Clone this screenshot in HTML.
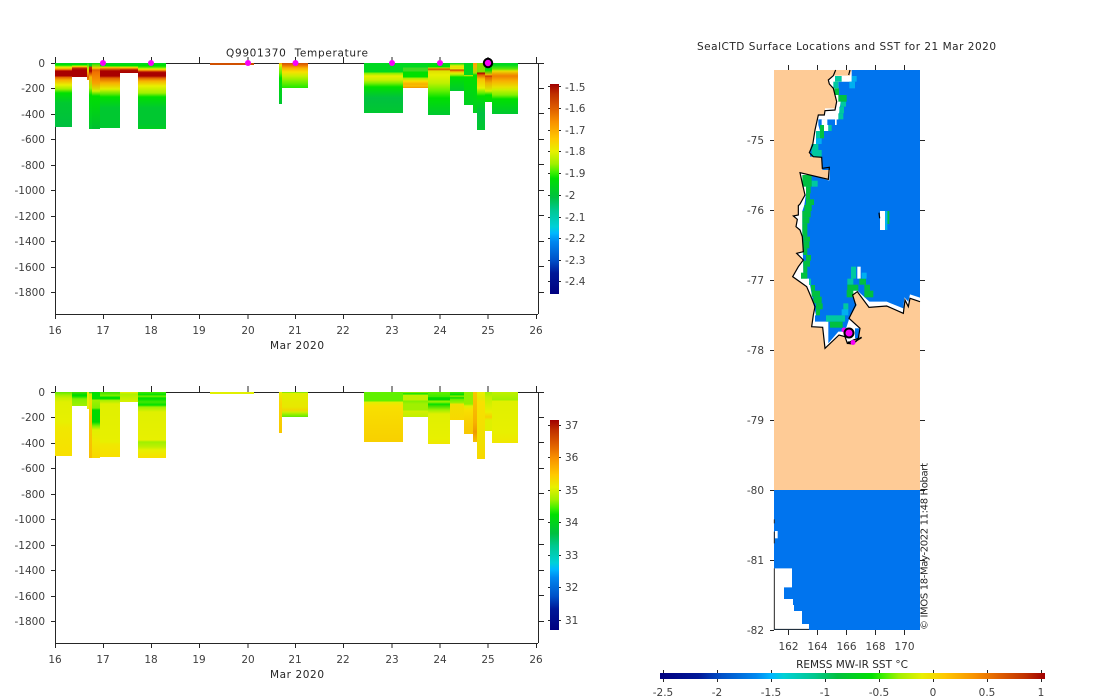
<!DOCTYPE html>
<html><head><meta charset="utf-8"><title>SealCTD</title>
<style>
html,body{margin:0;padding:0;background:#fff;width:1100px;height:700px;overflow:hidden}
svg{position:absolute;left:0;top:0}
.c{position:absolute}
text{font-family:"DejaVu Sans","Liberation Sans",sans-serif;font-size:10.5px;fill:#404040}
.t{fill:#262626}
</style></head><body>
<svg width="1100" height="700" viewBox="0 0 1100 700">
<defs>
<linearGradient id="jv" x1="0" y1="1" x2="0" y2="0">
<stop offset="0" stop-color="#000080"/><stop offset=".10" stop-color="#001898"/><stop offset=".16" stop-color="#0050c8"/><stop offset=".25" stop-color="#0088f0"/><stop offset=".29" stop-color="#00b8ff"/><stop offset=".32" stop-color="#00d0d8"/><stop offset=".40" stop-color="#00c890"/><stop offset=".46" stop-color="#00c040"/><stop offset=".55" stop-color="#00e000"/><stop offset=".58" stop-color="#40f000"/><stop offset=".62" stop-color="#a0f000"/><stop offset=".68" stop-color="#e8f000"/><stop offset=".74" stop-color="#ffc800"/><stop offset=".82" stop-color="#f89000"/><stop offset=".88" stop-color="#e06000"/><stop offset=".95" stop-color="#c03000"/><stop offset="1" stop-color="#a00000"/>
</linearGradient>
<linearGradient id="jh" x1="0" y1="0" x2="1" y2="0">
<stop offset="0" stop-color="#000080"/><stop offset=".10" stop-color="#001898"/><stop offset=".16" stop-color="#0050c8"/><stop offset=".25" stop-color="#0088f0"/><stop offset=".29" stop-color="#00b8ff"/><stop offset=".32" stop-color="#00d0d8"/><stop offset=".40" stop-color="#00c890"/><stop offset=".46" stop-color="#00c040"/><stop offset=".55" stop-color="#00e000"/><stop offset=".58" stop-color="#40f000"/><stop offset=".62" stop-color="#a0f000"/><stop offset=".68" stop-color="#e8f000"/><stop offset=".74" stop-color="#ffc800"/><stop offset=".82" stop-color="#f89000"/><stop offset=".88" stop-color="#e06000"/><stop offset=".95" stop-color="#c03000"/><stop offset="1" stop-color="#a00000"/>
</linearGradient>
</defs>
<g fill="none" stroke="#262626" stroke-width="1">
<path d="M55.5 57V319M538.5 63V314M55 314.500H538M55 63.500H544"/>
<path d="M103.500 57V63M151.500 57V63M199.500 57V63M248 57V63M295.500 57V63M343.500 57V63M392 57V63M440 57V63M488 57V63M536.500 57V63"/>
<path d="M103.500 314V319M151.500 314V319M199.500 314V319M248 314V319M295.500 314V319M343.500 314V319M392 314V319M440 314V319M488 314V319M536.500 314V319"/>
<path d="M51 63.500H55M51 88.500H55M51 114.500H55M51 139.500H55M51 165.500H55M51 190.500H55M51 216.500H55M51 241.500H55M51 267.500H55M51 292.500H55"/>
<path d="M538 88.500H544M538 113.500H544M538 139.500H544M538 164.500H544M538 190.500H544M538 215.500H544M538 241.500H544M538 266.500H544M538 292.500H544"/>
<path d="M548 86.500H550M548 108.500H550M548 130.500H550M548 151.500H550M548 173.500H550M548 195.500H550M548 217.500H550M548 238.500H550M548 260.500H550M548 281.500H550"/>
<path d="M559 86.500H561M559 108.500H561M559 130.500H561M559 151.500H561M559 173.500H561M559 195.500H561M559 217.500H561M559 238.500H561M559 260.500H561M559 281.500H561"/>
<path d="M55.500 386V648M538.500 392V643M55 643.500H538M55 392.500H544"/>
<path d="M103.500 386V392M151.500 386V392M199.500 386V392M248 386V392M295.500 386V392M343.500 386V392M392 386V392M440 386V392M488 386V392M536.500 386V392"/>
<path d="M103.500 643V648M151.500 643V648M199.500 643V648M248 643V648M295.500 643V648M343.500 643V648M392 643V648M440 643V648M488 643V648M536.500 643V648"/>
<path d="M51 392.500H55M51 417.500H55M51 443.500H55M51 468.500H55M51 494.500H55M51 519.500H55M51 545.500H55M51 570.500H55M51 596.500H55M51 621.500H55"/>
<path d="M538 417.500H544M538 442.500H544M538 468.500H544M538 493.500H544M538 519.500H544M538 544.500H544M538 570.500H544M538 595.500H544M538 621.500H544"/>
<path d="M548 425.500H550M548 457.500H550M548 490.500H550M548 522.500H550M548 555.500H550M548 587.500H550M548 620.500H550"/>
<path d="M559 425.500H561M559 457.500H561M559 490.500H561M559 522.500H561M559 555.500H561M559 587.500H561M559 620.500H561"/>
<path d="M788.500 65V70M817.500 65V70M846.500 65V70M875.500 65V70M904.500 65V70M788.500 630V635M817.500 630V635M846.500 630V635M875.500 630V635M904.500 630V635"/>
<path d="M770 140.500H774M770 210.500H774M770 280.500H774M770 350.500H774M770 420.500H774M770 490.500H774M770 560.500H774M770 630.500H774"/>
<path d="M920 140.500H925M920 210.500H925M920 280.500H925M920 350.500H925M920 420.500H925M920 490.500H925M920 560.500H925"/>
<path d="M663.500 670V682M717.500 670V682M771.500 670V682M825.500 670V682M879.500 670V682M933.500 670V682M987.500 670V682M1041.500 670V682"/>
</g>
<rect x="550" y="84" width="9" height="210" fill="url(#jv)"/>
<rect x="550" y="420" width="9" height="210" fill="url(#jv)"/>
<rect x="660" y="673" width="385" height="6" fill="url(#jh)"/>
<g text-anchor="end">
<text x="45" y="67">0</text><text x="45" y="92">-200</text><text x="45" y="118">-400</text><text x="45" y="143">-600</text><text x="45" y="169">-800</text><text x="45" y="194">-1000</text><text x="45" y="220">-1200</text><text x="45" y="245">-1400</text><text x="45" y="271">-1600</text><text x="45" y="296">-1800</text>
<text x="45" y="396">0</text><text x="45" y="421">-200</text><text x="45" y="447">-400</text><text x="45" y="472">-600</text><text x="45" y="498">-800</text><text x="45" y="523">-1000</text><text x="45" y="549">-1200</text><text x="45" y="574">-1400</text><text x="45" y="600">-1600</text><text x="45" y="625">-1800</text>
<text x="764" y="144">-75</text><text x="764" y="214">-76</text><text x="764" y="284">-77</text><text x="764" y="354">-78</text><text x="764" y="424">-79</text><text x="764" y="494">-80</text><text x="764" y="564">-81</text><text x="764" y="634">-82</text>
</g>
<g text-anchor="middle">
<text x="55" y="334">16</text><text x="103" y="334">17</text><text x="151" y="334">18</text><text x="199" y="334">19</text><text x="248" y="334">20</text><text x="295" y="334">21</text><text x="343" y="334">22</text><text x="392" y="334">23</text><text x="440" y="334">24</text><text x="488" y="334">25</text><text x="536" y="334">26</text>
<text x="55" y="663">16</text><text x="103" y="663">17</text><text x="151" y="663">18</text><text x="199" y="663">19</text><text x="248" y="663">20</text><text x="295" y="663">21</text><text x="343" y="663">22</text><text x="392" y="663">23</text><text x="440" y="663">24</text><text x="488" y="663">25</text><text x="536" y="663">26</text>
<text class="t" x="297" y="349" textLength="54">Mar 2020</text><text class="t" x="297" y="678" textLength="54">Mar 2020</text>
<text class="t" x="297" y="56.500" xml:space="preserve" textLength="142">Q9901370  Temperature</text>
<text class="t" x="846.500" y="50" textLength="299">SealCTD Surface Locations and SST for 21 Mar 2020</text>
<text class="t" x="852" y="668">REMSS MW-IR SST °C</text>
<text x="788.500" y="650">162</text><text x="817.500" y="650">164</text><text x="846.500" y="650">166</text><text x="875.500" y="650">168</text><text x="904.500" y="650">170</text>
<text x="663" y="696">-2.5</text><text x="717" y="696">-2</text><text x="771" y="696">-1.5</text><text x="825" y="696">-1</text><text x="879" y="696">-0.5</text><text x="933" y="696">0</text><text x="987" y="696">0.5</text><text x="1041" y="696">1</text>
</g>
<g>
<text x="565" y="91">-1.5</text><text x="565" y="112">-1.6</text><text x="565" y="134">-1.7</text><text x="565" y="155">-1.8</text><text x="565" y="177">-1.9</text><text x="565" y="199">-2</text><text x="565" y="221">-2.1</text><text x="565" y="242">-2.2</text><text x="565" y="264">-2.3</text><text x="565" y="285">-2.4</text>
<text x="565" y="429">37</text><text x="565" y="461">36</text><text x="565" y="494">35</text><text x="565" y="526">34</text><text x="565" y="559">33</text><text x="565" y="591">32</text><text x="565" y="624">31</text>
</g>
<!-- map -->
<rect x="774" y="70" width="146" height="420" fill="#fecb96"/>
<rect x="774" y="490" width="146" height="140" fill="#0074ee"/>
<g transform="translate(760,480) scale(.33333)">
<path d="M42 265H96V322H72V357H99V375H102V393H126V432H147V448H42Z" fill="#fff"/>
<rect x="45" y="153" width="8" height="22" fill="#fff"/>
<path d="M43 118V130M43 155V190M43 265V448H147" fill="none" stroke="#262626" stroke-width="3"/>
</g>
<g transform="translate(770,60) scale(.33333)">
<path fill="#fff" d="M245 30L240 47H200L190 47L175 60L178 72L190 85L195 105L200 125L195 150L165 152L163 165L145 165L135 210L128 255L118 278L130 290L155 292L157 325L178 322L175 358L90 338L97 370L105 405L90 432L85 437L85 465L70 468L82 478L78 500L90 510L97 530L100 575L80 580L100 600L85 620L68 650L110 680L125 715L135 740L130 765L125 800L158 802L165 865L207 825L225 830L232 850L250 840L265 835L270 805L237 775L257 735L248 705L262 695L297 742L350 738L400 760L405 720L415 740L420 715L450 725V30Z"/>
<path fill="#0074ee" d="M245 30V65H205V105L212 125L205 178H145V195L150 213H138V252H125L120 270V290L155 292L157 330H180L178 362L125 345H108V400L103 435L97 453V510L100 640H93V656H117L123 692L130 730L138 766H135V785H175V850L205 815L225 815L238 775L260 735L245 702L262 692L298 725L350 725L400 745L403 712L415 725L420 703L450 713V30Z"/>
<rect x="255" y="805" width="13" height="30" fill="#0074ee"/>
<g fill="#fff">
<rect x="195" y="48" width="50" height="17"/><rect x="165" y="145" width="40" height="33"/><rect x="155" y="178" width="17" height="17"/><rect x="195" y="178" width="5" height="17"/><rect x="162" y="195" width="13" height="18"/>
<rect x="330" y="453" width="15" height="57"/>
<rect x="262" y="620" width="10" height="36"/><rect x="245" y="692" width="17" height="8"/>
</g>
<g fill="#00c8a0">
<rect x="195" y="48" width="20" height="17"/><rect x="190" y="65" width="15" height="20"/><rect x="212" y="125" width="16" height="15"/><rect x="208" y="140" width="14" height="20"/><rect x="205" y="160" width="15" height="18"/><rect x="175" y="195" width="10" height="18"/><rect x="138" y="213" width="12" height="22"/><rect x="125" y="252" width="20" height="18"/><rect x="125" y="270" width="30" height="20"/><rect x="125" y="362" width="18" height="18"/>
<rect x="168" y="766" width="57" height="19"/><rect x="232" y="656" width="18" height="18"/><rect x="243" y="620" width="15" height="36"/><rect x="220" y="730" width="15" height="20"/><rect x="117" y="656" width="6" height="19"/>
</g>
<g fill="#00c040">
<rect x="193" y="85" width="14" height="20"/><rect x="205" y="105" width="25" height="20"/><rect x="150" y="195" width="12" height="18"/><rect x="150" y="213" width="12" height="22"/><rect x="97" y="345" width="28" height="35"/><rect x="108" y="380" width="14" height="20"/><rect x="108" y="400" width="12" height="18"/><rect x="108" y="418" width="24" height="17"/><rect x="103" y="435" width="22" height="18"/><rect x="97" y="453" width="25" height="19"/><rect x="97" y="472" width="21" height="18"/><rect x="97" y="490" width="15" height="20"/><rect x="97" y="510" width="15" height="20"/><rect x="100" y="530" width="20" height="15"/><rect x="100" y="545" width="18" height="20"/><rect x="100" y="565" width="12" height="20"/><rect x="108" y="585" width="15" height="17"/><rect x="100" y="602" width="20" height="18"/><rect x="100" y="620" width="12" height="18"/><rect x="93" y="638" width="19" height="18"/><rect x="123" y="675" width="12" height="17"/><rect x="125" y="692" width="25" height="18"/><rect x="130" y="710" width="25" height="20"/><rect x="138" y="730" width="20" height="18"/><rect x="138" y="748" width="12" height="18"/><rect x="180" y="785" width="38" height="18"/><rect x="230" y="690" width="20" height="22"/><rect x="232" y="674" width="33" height="18"/><rect x="268" y="656" width="20" height="18"/><rect x="283" y="674" width="17" height="18"/><rect x="283" y="692" width="27" height="20"/><rect x="352" y="453" width="6" height="39"/>
</g>
<g fill="#00b0f0">
<rect x="238" y="65" width="17" height="20"/><rect x="245" y="48" width="15" height="17"/><rect x="138" y="235" width="17" height="17"/><rect x="345" y="453" width="7" height="57"/><rect x="275" y="638" width="15" height="18"/><rect x="215" y="748" width="20" height="18"/>
</g>
<path fill="none" stroke="#000" stroke-width="3.6" stroke-linejoin="miter" d="M197 30L190 47L175 60L178 72L190 85L195 105L200 125L195 150L165 152L163 165L145 165L135 210L128 255L118 278L130 290L155 292L157 325L178 322L175 358L90 338L97 370L105 405L90 432L85 437L85 465L70 468L82 478L78 500L90 510L97 530L100 575L80 580L100 600L85 620L68 650L110 680L125 715L135 740L130 765L125 800L158 802L165 865L207 825L225 830L232 850L250 840L265 835L270 805L237 775L257 735L248 705L262 695L297 742L350 738L400 760L405 720L415 740L420 715L450 725M240 30L236 45M327 458L329 475"/>
<path fill="none" stroke="#000" stroke-width="8" d="M233 848L250 850"/>
<path fill="none" stroke="#000" stroke-width="5" d="M250 850L262 840L275 832"/>
</g>
<circle cx="844" cy="330" r="2.500" fill="#f800f8"/>
<circle cx="853" cy="342.500" r="2.500" fill="#f800f8"/>
<circle cx="849" cy="333" r="4.500" fill="#f800f8" stroke="#000" stroke-width="2"/>
<text class="t" transform="translate(927.500,630) rotate(-90)" textLength="167" style="font-size:10px">© IMOS 18-May-2022 11:48 Hobart</text>
</svg>

<!-- upper plot columns -->
<div class="c" style="left:55px;top:63px;width:17px;height:64px;background:linear-gradient(#00d820 0,#00e000 2px,#60f000 3px,#e8f000 4px,#f8b000 6px,#e05000 7px,#a80000 8px,#a80000 13px,#e06000 14px,#f8b000 17px,#e8f000 22px,#a0f000 26px,#00e000 30px,#00c830 40px,#00c040 64px)"></div>
<div class="c" style="left:72px;top:63px;width:15px;height:14px;background:linear-gradient(#00d820 0,#00e000 2px,#e8f000 3px,#f8a000 4px,#c03000 5px,#a80000 7px,#a80000 14px)"></div>
<div class="c" style="left:87px;top:63px;width:2px;height:17px;background:linear-gradient(#00d820 0,#a0f000 4px,#f8c000 8px,#e06000 14px,#f09000 17px)"></div>
<div class="c" style="left:89px;top:63px;width:3px;height:66px;background:linear-gradient(#00d820 0,#00d820 3px,#c03000 4px,#a80000 8px,#e06000 11px,#f8b000 14px,#a0f000 25px,#00e000 32px,#00c830 66px)"></div>
<div class="c" style="left:92px;top:63px;width:8px;height:66px;background:linear-gradient(#00d820 0,#60e000 2px,#f8d000 5px,#e06000 7px,#f07000 9px,#f8a000 20px,#d0f000 28px,#00e000 33px,#00c030 66px)"></div>
<div class="c" style="left:100px;top:63px;width:20px;height:65px;background:linear-gradient(#00d820 0,#00e000 3px,#e8e000 4px,#f8a000 5px,#c03000 7px,#a80000 8px,#a80000 13px,#e06000 15px,#f8b000 20px,#e0f000 26px,#60e800 31px,#00e000 34px,#00c830 45px,#00c830 65px)"></div>
<div class="c" style="left:120px;top:63px;width:18px;height:10px;background:linear-gradient(#00d820 0,#00e000 3px,#e8f000 4px,#f8b000 5px,#e06000 6px,#b01000 7px,#a80000 10px)"></div>
<div class="c" style="left:138px;top:63px;width:28px;height:66px;background:linear-gradient(#00d820 0,#00e000 3px,#80f000 5px,#e8f000 6px,#f8b000 7px,#e06000 8px,#b01000 9px,#a80000 10px,#a80000 13px,#e06000 15px,#f8b000 18px,#e8f000 23px,#a0f000 30px,#00e000 34px,#00c830 45px,#00c830 61px,#00d020 66px)"></div>
<div class="c" style="left:210px;top:63px;width:44px;height:2px;background:#d05000"></div>
<div class="c" style="left:279px;top:63px;width:3px;height:41px;background:linear-gradient(#f8a000 0,#e8f000 2px,#a0f000 5px,#60f000 10px,#00e000 15px,#00c830 41px)"></div>
<div class="c" style="left:282px;top:63px;width:26px;height:25px;background:linear-gradient(#d05000 0,#f08000 3px,#f8b000 5px,#f8e000 9px,#c8f000 13px,#80f000 18px,#20e800 25px)"></div>
<div class="c" style="left:364px;top:63px;width:39px;height:50px;background:linear-gradient(#00d820 0,#00d820 9px,#80f000 10px,#e8f000 13px,#c8f000 17px,#80f000 20px,#00e000 24px,#00c040 35px,#00c830 50px)"></div>
<div class="c" style="left:403px;top:63px;width:25px;height:25px;background:linear-gradient(#00d820 0,#00d820 4px,#40d820 5px,#40d820 8px,#00e000 9px,#00e000 14px,#a0f000 15px,#f8e000 18px,#f8b000 21px,#f8c000 23px,#f09000 25px)"></div>
<div class="c" style="left:428px;top:63px;width:22px;height:52px;background:linear-gradient(#00d820 0,#00e000 4px,#e8e000 5px,#c84000 6px,#e0e000 8px,#e8f000 12px,#c0f000 20px,#60f000 28px,#00e000 35px,#00c830 52px)"></div>
<div class="c" style="left:450px;top:63px;width:14px;height:28px;background:linear-gradient(#00d820 0,#e8f000 3px,#e8e000 4px,#e8f000 6px,#c03000 7px,#f09000 8px,#e0f000 10px,#a0f000 12px,#00e000 14px,#00c830 28px)"></div>
<div class="c" style="left:464px;top:63px;width:9px;height:42px;background:linear-gradient(#00d820 0,#00d820 12px,#e0f000 12px,#00e000 14px,#00d020 42px)"></div>
<div class="c" style="left:473px;top:63px;width:4px;height:50px;background:linear-gradient(#f8a000 0,#f8b000 3px,#a0e000 10px,#00e000 12px,#00d020 50px)"></div>
<div class="c" style="left:477px;top:63px;width:8px;height:67px;background:linear-gradient(#80e000 0,#80e000 9px,#a80000 10px,#e06000 12px,#f8c000 16px,#e8f000 25px,#60f000 30px,#00e000 33px,#00c040 50px,#00c830 67px)"></div>
<div class="c" style="left:485px;top:63px;width:7px;height:39px;background:linear-gradient(#00d820 0,#00e000 7px,#f8b000 12px,#c03000 13px,#e06000 14px,#f0b000 20px,#d0f000 28px,#00e000 32px,#00e000 39px)"></div>
<div class="c" style="left:492px;top:63px;width:26px;height:51px;background:linear-gradient(#00d820 0,#00d820 2px,#60e800 6px,#e8e000 8px,#f0a000 11px,#f08000 13px,#f8b000 18px,#e8e000 24px,#c8f000 27px,#80f000 32px,#00e000 36px,#00c830 51px)"></div>

<!-- lower plot columns -->
<div class="c" style="left:55px;top:392px;width:17px;height:64px;background:linear-gradient(#60e800 0,#a0f000 3px,#c8f000 6px,#e0f000 10px,#e8f000 30px,#f0e800 36px,#f8e000 64px)"></div>
<div class="c" style="left:72px;top:392px;width:15px;height:14px;background:linear-gradient(#40e000 0,#00d800 3px,#00e000 4px,#80f000 7px,#a0f000 14px)"></div>
<div class="c" style="left:87px;top:392px;width:2px;height:17px;background:#e8f000"></div>
<div class="c" style="left:89px;top:392px;width:3px;height:66px;background:linear-gradient(#00c830 0,#c8f000 2px,#f0e000 10px,#f8c800 25px,#f8c000 66px)"></div>
<div class="c" style="left:92px;top:392px;width:8px;height:66px;background:linear-gradient(#00e000 0,#00e000 7px,#a0f000 8px,#80f000 16px,#00d800 18px,#00d800 30px,#80f000 34px,#e0f000 38px,#f0e800 50px,#f8d800 66px)"></div>
<div class="c" style="left:100px;top:392px;width:20px;height:65px;background:linear-gradient(#40e000 0,#80f000 4px,#00e000 5px,#00e000 7px,#a0f000 8px,#e0f000 12px,#e8f000 50px,#f0e800 52px,#f8e000 65px)"></div>
<div class="c" style="left:120px;top:392px;width:18px;height:10px;background:linear-gradient(#e8f000 0,#b0f000 2px,#d8f000 10px)"></div>
<div class="c" style="left:138px;top:392px;width:28px;height:66px;background:linear-gradient(#40e800 0,#00e000 3px,#80f000 4px,#00e000 6px,#00e000 7px,#40e800 10px,#00e000 13px,#a0f000 15px,#e0f000 20px,#e8f000 48px,#a0f000 50px,#c0f000 55px,#e8f000 58px,#f8e000 66px)"></div>
<div class="c" style="left:210px;top:392px;width:44px;height:2px;background:#e0f000"></div>
<div class="c" style="left:279px;top:392px;width:3px;height:41px;background:linear-gradient(#e8f000 0,#f8d800 10px,#f8c800 41px)"></div>
<div class="c" style="left:282px;top:392px;width:26px;height:25px;background:linear-gradient(#40e000 0,#e0f000 1px,#e8e800 15px,#f0d800 18px,#d0f000 20px,#a0f000 22px,#60e800 25px)"></div>
<div class="c" style="left:364px;top:392px;width:39px;height:50px;background:linear-gradient(#60f000 0,#60f000 9px,#e0f000 10px,#f8e000 14px,#f8d800 30px,#f8d000 50px)"></div>
<div class="c" style="left:403px;top:392px;width:25px;height:25px;background:linear-gradient(#a0f000 0,#00e000 2px,#c0f000 3px,#c0f000 8px,#80f000 9px,#a0f000 12px,#a0f000 18px,#d0f000 19px,#c0f000 25px)"></div>
<div class="c" style="left:428px;top:392px;width:22px;height:52px;background:linear-gradient(#60f000 0,#40e800 5px,#00d800 5.500px,#00d800 8px,#a0f000 9px,#60f000 11px,#00e000 12px,#40e000 14px,#a0f000 18px,#e0f000 22px,#e8f000 47px,#f0e800 52px)"></div>
<div class="c" style="left:450px;top:392px;width:14px;height:28px;background:linear-gradient(#40e800 0,#00d800 3px,#a0f000 4px,#00d800 6px,#60f000 7px,#a0f000 11px,#f0e000 12px,#f8d800 28px)"></div>
<div class="c" style="left:464px;top:392px;width:9px;height:42px;background:linear-gradient(#90f000 0,#90f000 12px,#e0f000 14px,#f8e000 18px,#f8d000 30px,#f8c800 42px)"></div>
<div class="c" style="left:473px;top:392px;width:4px;height:50px;background:linear-gradient(#f8c800 0,#f8b000 30px,#f09800 40px,#f8c000 50px)"></div>
<div class="c" style="left:477px;top:392px;width:8px;height:67px;background:linear-gradient(#e8f000 0,#e8e800 6px,#f8e000 10px,#f0e000 50px,#f8d800 67px)"></div>
<div class="c" style="left:485px;top:392px;width:7px;height:39px;background:linear-gradient(#a0f000 0,#c0f000 5px,#e8f000 20px,#f8d000 25px,#e0f000 28px,#e0f000 39px)"></div>
<div class="c" style="left:492px;top:392px;width:26px;height:51px;background:linear-gradient(#c0f000 0,#a0f000 8px,#e0f000 9px,#e8f000 40px,#f0e800 51px)"></div>

<svg width="1100" height="300" viewBox="0 0 1100 300">
<g fill="#f800f8"><circle cx="103" cy="63" r="3"/><circle cx="151" cy="63" r="3"/><circle cx="248" cy="63" r="3"/><circle cx="295.500" cy="63" r="3"/><circle cx="392" cy="63" r="3"/><circle cx="440" cy="63" r="3"/></g>
<circle cx="488" cy="63" r="4.200" fill="#f800f8" stroke="#000" stroke-width="2"/>
</svg>
</body></html>
